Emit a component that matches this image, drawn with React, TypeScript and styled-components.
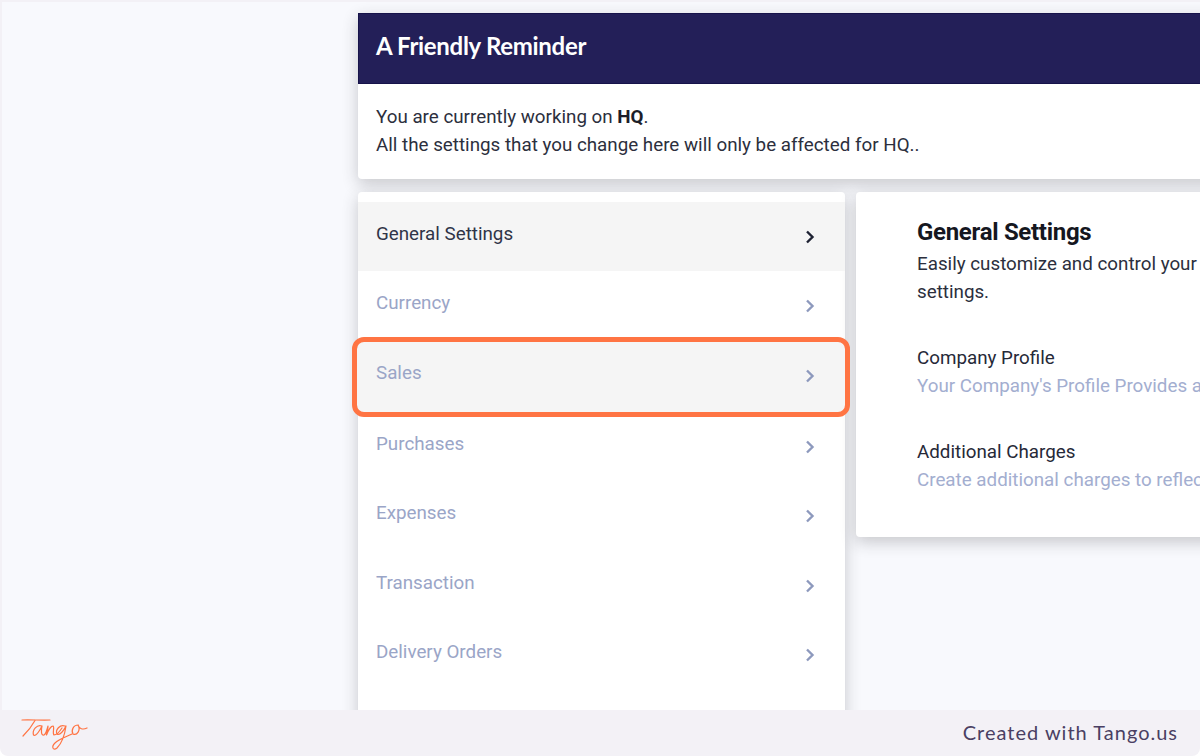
import React from 'react';
import styled, { createGlobalStyle } from 'styled-components';

const GlobalStyle = createGlobalStyle`
    html, body {
        margin: 0;
        padding: 0;
        width: 1200px;
        height: 756px;
        overflow: hidden;
        background: #ffffff;
    }
`;

const Frame = styled.div`
    width: 1200px;
    height: 756px;
    display: flex;
    flex-direction: column;
    overflow: hidden;
    background: #f3f1f6;
    border-radius: 0 0 8px 8px;
    font-family: Roboto, 'Liberation Sans', sans-serif;
`;

const Viewport = styled.div`
    height: 708px;
    box-sizing: border-box;
    margin: 2px 0 0 2px;
    flex: none;
    padding: 11px 0 0 356px;
    background: #f8f9fd;
    overflow: hidden;
`;

const Column = styled.div`
    width: 900px;
    display: flex;
    flex-direction: column;
    gap: 13px;
`;

const Card = styled.section`
    background: #ffffff;
    border-radius: 4px;
    box-shadow: 0 5px 16px rgba(40, 42, 46, 0.24);
`;

const ReminderHead = styled.h1`
    margin: 0;
    height: 71px;
    box-sizing: border-box;
    padding: 0 0 6px 17px;
    display: flex;
    align-items: center;
    background: #231f58;
    border: 1px solid #17134a;
    border-right: 0;
    color: #ffffff;
    font-size: 24px;
    font-weight: 700;
    letter-spacing: -0.3px;
    font-family: Lato, Roboto, sans-serif;
`;

const ReminderBody = styled.p`
    margin: 0;
    padding: 19px 18px 20px;
    font-size: 18.8px;
    line-height: 28px;
    color: #2c2f3d;

    strong {
        font-weight: 700;
        color: #1c1e2a;
    }
`;

const Split = styled.div`
    display: flex;
    align-items: flex-start;
    gap: 11px;
`;

const Menu = styled(Card)`
    width: 487px;
    flex: none;
    padding-top: 10px;
    height: 560px;
`;

const Row = styled.div<{ $active?: boolean; $current?: boolean; $height?: number; $shift?: number }>`
    position: relative;
    height: ${(p) => p.$height ?? 69.6}px;
    box-sizing: border-box;
    padding: ${(p) => 18 + (p.$shift ?? 0)}px 18px 0;
    display: flex;
    justify-content: space-between;
    align-items: flex-start;
    background: ${(p) => (p.$active || p.$current ? '#f5f5f5' : 'transparent')};
    color: ${(p) => (p.$current ? '#2f3448' : '#9aa5c7')};
    font-size: 18.8px;
    line-height: 26px;
`;

const Chevron = styled.svg`
    width: 14px;
    height: 18px;
    margin: 7px 10px 0 0;
    flex: none;
`;

const Highlight = styled.div`
    position: absolute;
    left: -6px;
    right: -5px;
    top: -4px;
    height: 80px;
    box-sizing: border-box;
    border: 5px solid #ff7443;
    border-radius: 12px;
    box-shadow: inset 0 0 0 2px #f5f5f5;
    pointer-events: none;
`;

const Detail = styled(Card)`
    flex: 1;
    height: 345px;
    box-sizing: border-box;
    padding: 25px 0 0 61px;
    overflow: hidden;
    white-space: nowrap;
`;

const DetailTitle = styled.h2`
    margin: 0 0 3px;
    font-size: 24px;
    line-height: 30px;
    font-weight: 700;
    letter-spacing: -0.3px;
    color: #15171f;
`;

const DetailText = styled.p`
    margin: 0 0 38px;
    font-size: 18.8px;
    line-height: 28px;
    color: #2c2f3d;
`;

const Option = styled.div`
    margin-bottom: 38px;
    font-size: 18.8px;
    line-height: 28px;
`;

const OptionName = styled.div`
    color: #262938;
`;

const OptionHint = styled.div`
    color: #a3aed0;
`;

const Footer = styled.footer`
    flex: 1;
    display: flex;
    align-items: center;
    justify-content: space-between;
    padding: 0 22px 2px 20px;
    color: #4a3f63;
    font-family: Lato, sans-serif;
    font-size: 20px;
    letter-spacing: 1px;
`;

const Logo = styled.svg`
    width: 70px;
    height: 36px;
    flex: none;
    margin-top: 2px;
`;

const ChevronIcon = ({ dark }: { dark?: boolean }) => (
    <Chevron viewBox="0 0 14 18" fill="none" stroke={dark ? '#1e2233' : '#8d99bd'} strokeWidth="2.4">
        <path d="M4 3.5 L9.5 9 L4 14.5" />
    </Chevron>
);

const TangoLogo = () => (
    <Logo viewBox="0 0 70 36" fill="none" stroke="#ff7443" strokeWidth="1.2" strokeLinecap="round" strokeLinejoin="round">
        <path d="M2 5 C10 4.5 22 5.5 30 5" />
        <path d="M15 5.5 C12 11 7 17 3 21" />
        <path d="M22 11 C17 9 12 15 13.5 20 C16 22 20 15 22 11 C21 15 21 21 24 20 C26 19 27 15 28 11 C28 14 27 18 26.5 20 C28 16 31 11 33 11 C35 12 32 18 34 20 C37 20 40 16 42 13" />
        <path d="M45 11 C40 9 35 15 37 19 C40 21 44 15 46 11 C45 18 42 28 37 33 C33 36 31 32 35 28 C39 24 46 22 52 19" />
        <path d="M58 10 C53 10 51 16 53 19 C57 21 61 15 58 10 C59 14 63 15 67 13" />
    </Logo>
);

const items = ['Currency', 'Sales', 'Purchases', 'Expenses', 'Transaction', 'Delivery Orders'];

export default function App() {
    return (
        <Frame>
            <GlobalStyle />
            <Viewport>
                <Column>
                    <Card>
                        <ReminderHead>A Friendly Reminder</ReminderHead>
                        <ReminderBody>
                            You are currently working on <strong>HQ</strong>.
                            <br />
                            All the settings that you change here will only be affected for HQ..
                        </ReminderBody>
                    </Card>
                    <Split>
                        <Menu>
                            <Row $current $height={68.6} $shift={1}>
                                <span>General Settings</span>
                                <ChevronIcon dark />
                            </Row>
                            {items.map((item) => (
                                <Row
                                    key={item}
                                    $active={item === 'Sales'}
                                    $height={item === 'Currency' ? 70.6 : undefined}
                                    $shift={item === 'Delivery Orders' || item === 'Currency' || item === 'Sales' ? 1 : 2}>
                                    <span>{item}</span>
                                    <ChevronIcon />
                                    {item === 'Sales' && <Highlight />}
                                </Row>
                            ))}
                        </Menu>
                        <Detail>
                            <DetailTitle>General Settings</DetailTitle>
                            <DetailText>
                                Easily customize and control your business
                                <br />
                                settings.
                            </DetailText>
                            <Option>
                                <OptionName>Company Profile</OptionName>
                                <OptionHint>Your Company's Profile Provides all the information</OptionHint>
                            </Option>
                            <Option>
                                <OptionName>Additional Charges</OptionName>
                                <OptionHint>Create additional charges to reflect on your invoices</OptionHint>
                            </Option>
                        </Detail>
                    </Split>
                </Column>
            </Viewport>
            <Footer>
                <TangoLogo />
                <span>Created with Tango.us</span>
            </Footer>
        </Frame>
    );
}
